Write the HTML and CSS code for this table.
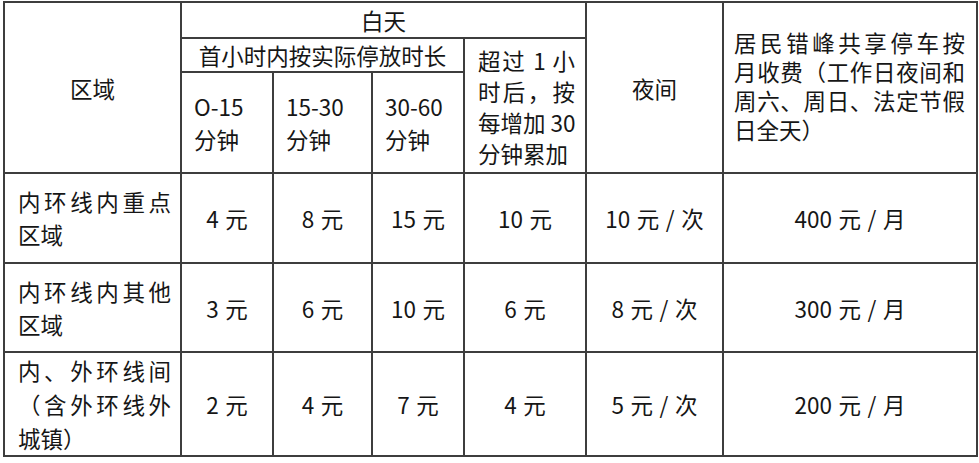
FILE: index.html
```html
<!DOCTYPE html>
<html lang="zh-CN">
<head>
<meta charset="utf-8">
<link rel="stylesheet" href="styles.css">
</head>
<body>
<table class="fees">
  <colgroup>
    <col class="c-area">
    <col class="c-a">
    <col class="c-b">
    <col class="c-c">
    <col class="c-d">
    <col class="c-night">
    <col class="c-month">
  </colgroup>
  <thead>
    <tr class="r-day">
      <th rowspan="3" class="center">区域</th>
      <th colspan="4" class="center">白天</th>
      <th rowspan="3" class="center">夜间</th>
      <th rowspan="3" class="lines month"><span class="j">居民错峰共享停车按</span><span class="j">月收费（工作日夜间和</span><span class="j">周六、周日、法定节假</span><span>日全天）</span></th>
    </tr>
    <tr class="r-first">
      <th colspan="3" class="center">首小时内按实际停放时长</th>
      <th rowspan="2" class="lines over"><span class="j">超过 1 小</span><span class="j">时后，按</span><span class="j">每增加 30</span><span>分钟累加</span></th>
    </tr>
    <tr class="r-sub">
      <th class="lines sub"><span>O-15</span><span>分钟</span></th>
      <th class="lines sub"><span>15-30</span><span>分钟</span></th>
      <th class="lines sub"><span>30-60</span><span>分钟</span></th>
    </tr>
  </thead>
  <tbody>
    <tr class="r1">
      <td class="lines area"><span class="j">内环线内重点</span><span>区域</span></td>
      <td class="num">4 元</td>
      <td class="num">8 元</td>
      <td class="num">15 元</td>
      <td class="num">10 元</td>
      <td class="num">10 元 / 次</td>
      <td class="num">400 元 / 月</td>
    </tr>
    <tr class="r2">
      <td class="lines area"><span class="j">内环线内其他</span><span>区域</span></td>
      <td class="num">3 元</td>
      <td class="num">6 元</td>
      <td class="num">10 元</td>
      <td class="num">6 元</td>
      <td class="num">8 元 / 次</td>
      <td class="num">300 元 / 月</td>
    </tr>
    <tr class="r3">
      <td class="lines area tall"><span class="j">内、外环线间</span><span class="j">（含外环线外</span><span>城镇）</span></td>
      <td class="num">2 元</td>
      <td class="num">4 元</td>
      <td class="num">7 元</td>
      <td class="num">4 元</td>
      <td class="num">5 元 / 次</td>
      <td class="num">200 元 / 月</td>
    </tr>
  </tbody>
</table>
</body>
</html>
```

FILE: styles.css
```css
html, body {
  margin: 0;
  padding: 0;
  background: #ffffff;
}

body {
  padding: 1px 0 0 3px;
  font-family: "Noto Sans CJK SC", "Noto Sans", sans-serif;
  color: #161616;
  font-size: 22.5px;
}

.fees {
  border-collapse: collapse;
  table-layout: fixed;
  width: 973px;
}

.c-area { width: 177px; }
.c-a { width: 92px; }
.c-b { width: 99px; }
.c-c { width: 92px; }
.c-d { width: 122px; }
.c-night { width: 137px; }
.c-month { width: 254px; }

.fees th,
.fees td {
  border: 2px solid #3d3d3d;
  padding: 0;
  font-weight: 400;
  text-align: center;
  vertical-align: middle;
  line-height: 30px;
  white-space: nowrap;
}

.fees .num {
  word-spacing: 1.5px;
}

.r-day { height: 36px; }
.r-first { height: 34px; }
.r-sub { height: 101px; }
.r1 { height: 90px; }
.r2 { height: 89px; }
.r3 { height: 103px; }

.fees .lines {
  text-align: left;
}

.lines span {
  display: block;
}

.lines .j {
  text-align: justify;
  text-align-last: justify;
}

.fees .sub {
  padding: 0 8px 0 12px;
  line-height: 33px;
}

.fees .over {
  padding: 2px 10px 0 13px;
  line-height: 31px;
}

.fees .month {
  padding: 0 11px 4px 10px;
  line-height: 29px;
}

.fees .area {
  padding: 0 9px 0 13px;
  line-height: 33px;
}

.fees .area.tall {
  line-height: 34px;
}
```
